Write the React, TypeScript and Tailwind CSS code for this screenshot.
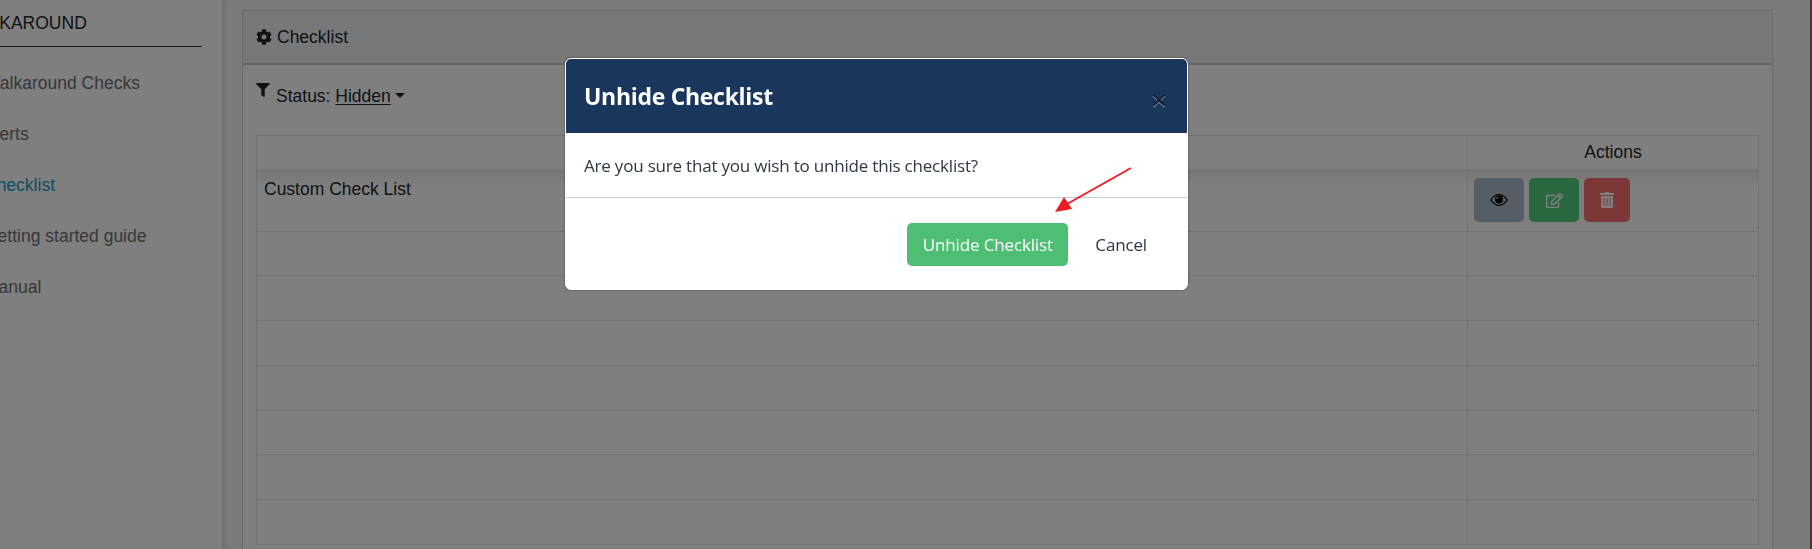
import { FaCog, FaFilter, FaRegEdit, FaTrashAlt } from "react-icons/fa";

const navItems = [
  { label: "Walkaround Checks", active: false },
  { label: "Alerts", active: false },
  { label: "Checklist", active: true },
  { label: "Getting started guide", active: false },
  { label: "Manual", active: false },
];

const emptyRows = [44, 45, 45, 45, 44, 45, 45];

const Sidebar = () => (
  <aside className="relative h-[549px] w-[222px] shrink-0 overflow-hidden bg-white">
    <div className="ml-[-16px]">
      <div className="h-[47px] w-[218px] whitespace-nowrap border-b border-[#333] pt-[13px] text-[17.5px] leading-[20px] text-[#212529]">
        <span className="ml-[-22px]">WALKAROUND</span>
      </div>
      <nav className="flex flex-col pt-[11px]">
        {navItems.map((item) => (
          <a
            key={item.label}
            className={`flex h-[51px] items-center whitespace-nowrap text-[17.5px] ${item.active ? "text-[#1a9ccc]" : "text-[#6e6e6e]"}`}
          >
            {item.label}
          </a>
        ))}
      </nav>
    </div>
  </aside>
);

const EyeIcon = () => (
  <svg width="18" height="12" viewBox="0 0 18 12" fill="none">
    <path
      d="M0.8 6C3.4 2.2 6 0.7 9 0.7S14.6 2.2 17.2 6C14.6 9.8 12 11.3 9 11.3S3.4 9.8 0.8 6Z"
      stroke="#000"
      strokeWidth="1.2"
    />
    <circle cx="9" cy="5.6" r="4" fill="#000" />
    <circle cx="7.4" cy="4" r="1" fill="#aab9c4" />
  </svg>
);

const ActionButtons = () => (
  <div className="flex gap-[5px]">
    <button className="flex h-[44px] w-[50px] items-center justify-center rounded-[5px] bg-[#aabcc9]">
      <EyeIcon />
    </button>
    <button className="flex h-[44px] w-[50px] items-center justify-center rounded-[5px] bg-[#52d17f] text-[17px] text-white">
      <FaRegEdit />
    </button>
    <button className="flex h-[44px] w-[46px] items-center justify-center rounded-[5px] bg-[#fb6f6f] text-[16px] text-white">
      <FaTrashAlt />
    </button>
  </div>
);

const ChecklistTable = () => (
  <div className="mx-[13px] border border-b-0 border-[#e0e0e0] text-[17.5px] text-[#212529]">
    <div className="flex h-[33px]">
      <div className="flex-1" />
      <div className="flex w-[291px] items-center justify-center border-l border-[#e9e9e9]">Actions</div>
    </div>
    <div className="flex h-[63px] border-b border-[#e4e4e4] bg-gradient-to-b from-[#ebebeb] from-0% to-white to-[28%]">
      <div className="flex-1 px-[7px] pt-[8px] leading-[24px]">Custom Check List</div>
      <div className="w-[291px] border-l border-[#e9e9e9] pl-[6px] pt-[9px]">
        <ActionButtons />
      </div>
    </div>
    {emptyRows.map((height, i) => (
      <div key={i} className="flex border-b border-[#e4e4e4]" style={{ height }}>
        <div className="flex-1" />
        <div className="w-[291px] border-l border-[#e9e9e9]" />
      </div>
    ))}
  </div>
);

const ChecklistPanel = () => (
  <main className="min-w-0 flex-1 border-r-2 border-[#747474] bg-[#f6f6f6] pl-[20px] pr-[37px] pt-[10px] shadow-[inset_6px_0_6px_-4px_rgba(0,0,0,0.12)]">
    <div className="h-[539px] overflow-hidden border border-b-0 border-[#d4d4d4] bg-white">
      <div className="flex h-[54px] items-center gap-[5px] border-b-2 border-[#c8c8c8] bg-[#edf0f3] pl-[13px] text-[17.5px] text-[#212529]">
        <FaCog className="text-[16px]" />
        <span>Checklist</span>
      </div>
      <div className="flex h-[70px] items-start pl-[13px] pt-[19px] text-[17.5px] leading-[24px] text-[#212529]">
        <FaFilter className="mr-[6px] mt-[-1px] text-[14px]" />
        <span>Status:&nbsp;</span>
        <span className="underline underline-offset-2">Hidden</span>
        <span className="ml-[4px] mt-[9px] h-0 w-0 border-x-[5px] border-t-[5px] border-x-transparent border-t-[#212529]" />
      </div>
      <ChecklistTable />
    </div>
  </main>
);

const UnhideModal = () => (
  <div className="fixed inset-0 bg-black/50">
    <div className="absolute left-[565px] top-[58px] w-[623px] overflow-hidden rounded-[6px] border border-white bg-white font-['Open_Sans',sans-serif] shadow-[0_0_2px_rgba(0,0,0,0.6)]">
      <div className="flex h-[74px] items-center justify-between bg-[#1a365d] pl-[18px] pr-[20px]">
        <h2 className="pt-[1px] text-[23px] font-bold tracking-[-0.3px] text-white">Unhide Checklist</h2>
        <button className="mt-[6px] text-[28px] font-normal leading-none text-black opacity-50 [text-shadow:0_1px_0_#fff]">×</button>
      </div>
      <div className="flex h-[65px] items-center border-b border-[#c0ccd6] pl-[18px] pt-[1px] text-[17px] tracking-[-0.2px] text-[#2d3748]">
        Are you sure that you wish to unhide this checklist?
      </div>
      <div className="flex h-[91px] items-start justify-end gap-[27px] pr-[40px] pt-[25px] text-[17px] tracking-[-0.15px]">
        <button className="h-[43px] w-[161px] rounded-[5px] bg-[#4fbe75] text-white">Unhide Checklist</button>
        <button className="h-[43px] text-[#2d3748]">Cancel</button>
      </div>
    </div>
    <svg className="absolute left-[1050px] top-[164px]" width="90" height="54" viewBox="0 0 90 54" fill="none">
      <line x1="81" y1="4" x2="17" y2="40" stroke="#ed1c24" strokeWidth="2" />
      <polygon points="5,48 14,33 22,45" fill="#ed1c24" />
    </svg>
  </div>
);

export default function App() {
  return (
    <div className="flex h-[549px] w-[1812px] overflow-hidden bg-white font-['Liberation_Sans',Arial,sans-serif]">
      <Sidebar />
      <ChecklistPanel />
      <UnhideModal />
    </div>
  );
}
